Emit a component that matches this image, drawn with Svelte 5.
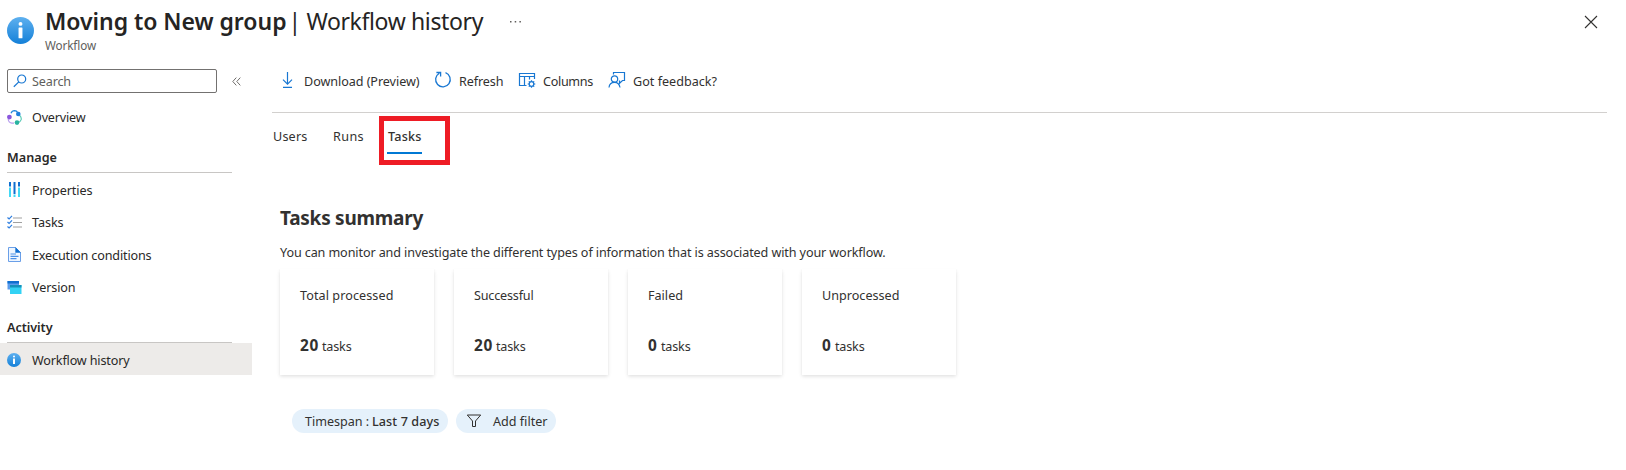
<script>
  // Spreads the letters of a label so that it fills the given width.
  function fit(node, width) {
    const apply = () => {
      node.style.letterSpacing = '0px';
      const natural = node.getBoundingClientRect().width;
      node.style.letterSpacing = (width - natural) / node.textContent.length + 'px';
    };
    apply();
    document.fonts?.ready.then(apply);
  }

  const manage = [
    { icon: 'properties', label: 'Properties', w: 60.5, h: 33 },
    { icon: 'tasks', label: 'Tasks', w: 31.5, h: 32 },
    { icon: 'document', label: 'Execution conditions', w: 119.5, h: 33 },
    { icon: 'version', label: 'Version', w: 43.5, h: 32 }
  ];
  const cards = [
    { label: 'Total processed', w: 93.5, value: '20', vw: 19 },
    { label: 'Successful', w: 59.5, value: '20', vw: 19 },
    { label: 'Failed', w: 35, value: '0', vw: 10 },
    { label: 'Unprocessed', w: 77.5, value: '0', vw: 10 }
  ];
</script>

{#snippet info(size)}
  <svg width={size} height={size} viewBox="0 0 18 18">
    <defs>
      <linearGradient id="info{size}" x1="0" y1="0" x2="0" y2="1">
        <stop offset="0" stop-color="#5eb0ef" /><stop offset="1" stop-color="#1480d8" />
      </linearGradient>
    </defs>
    <circle cx="9" cy="9" r="9" fill="url(#info{size})" />
    <circle cx="9" cy="4.6" r="1.3" fill="#fff" />
    <rect x="7.7" y="7" width="2.6" height="7.2" rx=".4" fill="#fff" />
  </svg>
{/snippet}

{#snippet icon(name)}
  {#if name === 'overview'}
    <svg width="15" height="15" viewBox="0 0 15 15" fill="none">
      <path d="M4 3.3Q5 .6 7.6 .6Q9.6 .7 10.6 2.4" stroke="#1f86dc" stroke-width="1.2" />
      <path d="M12.5 5.3Q14.7 7.4 14.2 9.6Q13.4 12.2 10.6 12.6" stroke="#5fcdb8" stroke-width="1.2" />
      <path d="M1.2 9Q1.4 12.6 5 13.1L7 13.2" stroke="#b9a0ee" stroke-width="1.2" />
      <circle cx="11.3" cy="4" r="2.3" fill="#1f7fdc" />
      <circle cx="2.4" cy="7.1" r="2.4" fill="#8b57dd" />
      <circle cx="10" cy="12.6" r="2.3" fill="#29b3a0" />
    </svg>
  {:else if name === 'properties'}
    <svg width="15" height="15" viewBox="0 0 15 15">
      <path d="M2 0h2v4.500H2zM11 0h2v4.500h-2zM6.500 0h2v12h-2z" fill="#0f6fd0" />
      <path d="M2 5.500h2V15H2zM11 5.500h2V15h-2zM6.500 12.500h2V15h-2z" fill="#42d9f5" />
    </svg>
  {:else if name === 'tasks'}
    <svg width="15" height="15" viewBox="0 0 15 15" fill="none">
      <path d="M6 3H15M6 7.500H15M6 12H15" stroke="#a0a0a0" stroke-width="1.200" />
      <path d="M.5 2.500L2.100 4L5 .9M.5 7L2.100 8.500L5 5.400M.5 11.500L2.100 13L5 9.900" stroke="#2f7fe0" stroke-width="1.200" />
    </svg>
  {:else if name === 'document'}
    <svg width="15" height="15" viewBox="0 0 15 15">
      <path d="M1.500 .5H8.500L13.500 5.500V14.500H1.500z" fill="#eef6ff" stroke="#6a9fe8" />
      <path d="M8.300 0L14 5.700H8.300z" fill="#0f6fd0" />
      <path d="M3.500 7H9M3.500 9.300H11.500M3.500 11.600H9.500" stroke="#4a90e6" stroke-width="1.200" />
    </svg>
  {:else if name === 'version'}
    <svg width="15" height="15" viewBox="0 0 15 15">
      <path d="M.5 1H12v8.500H.5z" fill="#5a9cec" />
      <path d="M.5 1H12v2.500H.5z" fill="#0f6fd0" />
      <path d="M3 5H14.500V14H3z" fill="#32d2f4" />
      <path d="M3 5H14.500V7.500H3z" fill="#1591bb" />
    </svg>
  {/if}
{/snippet}

<div class="page">
  <header>
    <div class="badge">{@render info(27)}</div>
    <div class="titles">
      <h1><b use:fit={241.5}>Moving to New group</b><span use:fit={194.5}>| Workflow history</span></h1>
      <div class="sub"><span use:fit={51}>Workflow</span></div>
    </div>
    <svg class="more" width="13" height="3" viewBox="0 0 13 3"><path d="M1 1h1.500v1.500H1zM5.700 1h1.500v1.500H5.700zM10.400 1h1.500v1.500h-1.500z" fill="#605e5c" /></svg>
    <svg class="close" width="14" height="14" viewBox="0 0 14 14"><path d="M1 1L13 13M13 1L1 13" stroke="#323130" stroke-width="1.100" /></svg>
  </header>

  <div class="body">
    <nav>
      <div class="searchrow">
        <div class="search">
          <svg width="14" height="14" viewBox="0 0 14 14" fill="none" stroke="#1877d2" stroke-width="1.200"><circle cx="8.700" cy="5" r="4" /><path d="M5.800 7.900L.8 12.800" /></svg>
          <span use:fit={39}>Search</span>
        </div>
        <svg class="collapse" width="9" height="9" viewBox="0 0 9 9" fill="none" stroke="#706e6c"><path d="M4.300 .6L.8 4.500L4.300 8.400M8.300 .6L4.800 4.500L8.300 8.400" /></svg>
      </div>
      <div class="item overview">{@render icon('overview')}<span use:fit={53.5}>Overview</span></div>
      <h2 class="first"><span use:fit={50}>Manage</span></h2>
      {#each manage as m}
        <div class="item" class:tall={m.h === 33}>{@render icon(m.icon)}<span use:fit={m.w}>{m.label}</span></div>
      {/each}
      <h2 class="second"><span use:fit={45.5}>Activity</span></h2>
      <div class="item active">{@render info(14)}<span use:fit={97.5}>Workflow history</span></div>
    </nav>

    <main>
      <div class="toolbar">
        <div class="tool download">
          <svg width="16" height="18" viewBox="0 0 16 18" fill="none" stroke="#1877d2" stroke-width="1.200"><path d="M7.500 1V13M3 8.700L7.500 13.200L12 8.700M3 16.400H12" /></svg>
          <span use:fit={115.5}>Download (Preview)</span>
        </div>
        <div class="tool refresh">
          <svg width="18" height="18" viewBox="0 0 18 18" fill="none" stroke="#1877d2" stroke-width="1.300"><path d="M11.500 1.700A7.300 7.300 0 1 1 5.300 2.200M2.400 1.500H6.600V5.600" /></svg>
          <span use:fit={44.5}>Refresh</span>
        </div>
        <div class="tool columns">
          <svg width="18" height="18" viewBox="0 0 18 18" fill="none" stroke="#1877d2" stroke-width="1.200"><path d="M8.500 14.500H1.500V2.500H16.500V8M1.500 5.500H16.500M6.500 5.500V14.500M11.500 5.500V8.500" /><circle cx="13.500" cy="13" r="2.300" /><path d="M13.500 9.200V10.700M13.500 15.300V16.800M9.700 13H11.200M15.800 13H17.300M10.800 10.300L11.900 11.400M15.100 14.600L16.200 15.700M16.200 10.300L15.100 11.400M11.900 14.600L10.800 15.700" /></svg>
          <span use:fit={50}>Columns</span>
        </div>
        <div class="tool feedback">
          <svg width="18" height="18" viewBox="0 0 18 18" fill="none" stroke="#1877d2" stroke-width="1.200"><path d="M5.500 3.500V1.500H16.500V9.500H14.500L11.500 12.300V9.500" /><circle cx="6.500" cy="8" r="3.200" /><path d="M1 16.500C1.300 13 3.500 11.300 6.500 11.300C9.300 11.300 11.500 13 12 16.500" /></svg>
          <span use:fit={84}>Got feedback?</span>
        </div>
      </div>

      <div class="tabs">
        <div class="tab users"><span use:fit={34.5}>Users</span></div>
        <div class="tab runs"><span use:fit={31}>Runs</span></div>
        <div class="marked"><div class="tab selected"><span use:fit={33.5}>Tasks</span></div></div>
      </div>

      <section>
        <h3><span use:fit={143}>Tasks summary</span></h3>
        <p><span use:fit={605.5}>You can monitor and investigate the different types of information that is associated with your workflow.</span></p>
        <div class="cards">
          {#each cards as c}
            <article>
              <div class="label"><span use:fit={c.w}>{c.label}</span></div>
              <div class="value"><b use:fit={c.vw}>{c.value}</b><span use:fit={29.5}>tasks</span></div>
            </article>
          {/each}
        </div>
        <div class="filters">
          <div class="pill time"><span use:fit={64}>Timespan :</span><b use:fit={67.500}>Last 7 days</b></div>
          <div class="pill add">
            <svg width="16" height="14" viewBox="0 0 16 14" fill="none" stroke="#323130"><path d="M1.300 1H14.700L9.500 7V12.500H6.500V7z" /></svg>
            <span use:fit={54.500}>Add filter</span>
          </div>
        </div>
      </section>
    </main>
  </div>
</div>

<style>
  :global(body) { margin: 0; background: #fff; }
  .page { width: 1626px; height: 470px; overflow: hidden; box-sizing: border-box; font: 12.6px/18px "Noto Sans", "Open Sans", sans-serif; color: #323130; }
  .page span, .page b { white-space: pre; display: inline-block; }
  svg { display: block; flex: none; }
  h1, h2, h3, p { margin: 0; font-weight: 400; }
  header { display: flex; height: 61px; }
  .badge { flex: none; padding: 17px 0 0 7px; width: 45px; box-sizing: border-box; }
  h1 { font-size: 23px; line-height: 32px; margin-top: 5px; color: #252423; display: flex; gap: 2px; }
  h1 b { font-weight: 600; }
  .sub { font-size: 11.7px; line-height: 14px; padding-top: 1px; color: #605e5c; }
  .more { margin: 20px 0 0 26px; }
  .close { margin: 15px 28px 0 auto; }
  .body { display: flex; }
  nav { width: 252px; flex: none; margin-right: 20px; }
  .searchrow { display: flex; align-items: center; padding: 8px 0 0 7px; }
  .search { width: 210px; height: 24px; box-sizing: border-box; border: 1px solid #737170; border-radius: 2px; display: flex; align-items: center; padding-left: 5px; gap: 5px; color: #605e5c; }
  .collapse { margin-left: 15px; }
  .item { display: flex; align-items: center; height: 32px; padding-left: 7px; gap: 10px; color: #292827; }
  .item span, .tool span, .search span, .pill span, .pill b { padding-top: 2px; }
  .tall { height: 33px; }
  .overview { margin-top: 8px; }
  h2 { margin-left: 7px; width: 225px; box-sizing: border-box; height: 30px; border-bottom: 1px solid #c8c6c4; font-size: 12.6px; line-height: 18px; padding-top: 6px; color: #292827; }
  h2 span { font-weight: 600; }
  .first { margin-top: 10px; }
  .second { margin-top: 10px; }
  .active { background: #edebe9; gap: 11px; }
  .active span { padding-top: 3px; }
  .active svg { margin-top: 1px; }
  main { width: 1335px; }
  .toolbar { display: flex; height: 52px; box-sizing: border-box; border-bottom: 1px solid #d2d0ce; padding: 10px 0 0 8px; }
  .tool { display: flex; align-items: center; height: 20px; }
  .tool svg { margin-top: -2px; }
  .download { gap: 8px; }
  .refresh { margin-left: 14.5px; gap: 7px; }
  .columns { margin-left: 14.5px; gap: 7px; }
  .feedback { margin-left: 15px; gap: 7px; }
  .tabs { display: flex; align-items: flex-start; padding-top: 3px; height: 91px; box-sizing: border-box; }
  .users { margin: 11px 0 0 1px; }
  .runs { margin: 11px 0 0 25.5px; }
  .tab { height: 18px; line-height: 18px; padding-top: 1px; }
  .marked { margin-left: 15px; width: 71px; height: 49px; border: 5px solid #ee1c25; box-sizing: border-box; padding: 6px 0 0 3px; }
  .selected { width: 34px; padding-left: 1px; height: 24px; border-bottom: 2px solid #0078d4; }
  .selected span { font-weight: 500; }
  section { padding-left: 8px; }
  h3 { font-size: 19px; line-height: 28px; height: 40px; }
  h3 span { font-weight: 700; }
  p { height: 25px; }
  .cards { display: flex; gap: 20px; }
  article { width: 154px; height: 106px; box-sizing: border-box; padding: 18px 20px 0; background: #fff; box-shadow: 0 1.600px 3.600px rgba(0,0,0,.13), 0 .3px .9px rgba(0,0,0,.1); }
  .label { height: 48px; }
  .value { display: flex; align-items: baseline; gap: 3px; line-height: 22px; }
  .value b { font-size: 15.400px; font-weight: 700; }
  .filters { display: flex; gap: 8px; padding: 34px 0 0 12px; }
  .pill { height: 24px; border-radius: 12px; background: #e5f1fb; display: flex; align-items: center; box-sizing: border-box; }
  .time { width: 156px; padding-left: 13px; gap: 3px; }
  .time b { font-weight: 500; }
  .add { width: 100px; padding-left: 10px; gap: 11px; }
</style>
